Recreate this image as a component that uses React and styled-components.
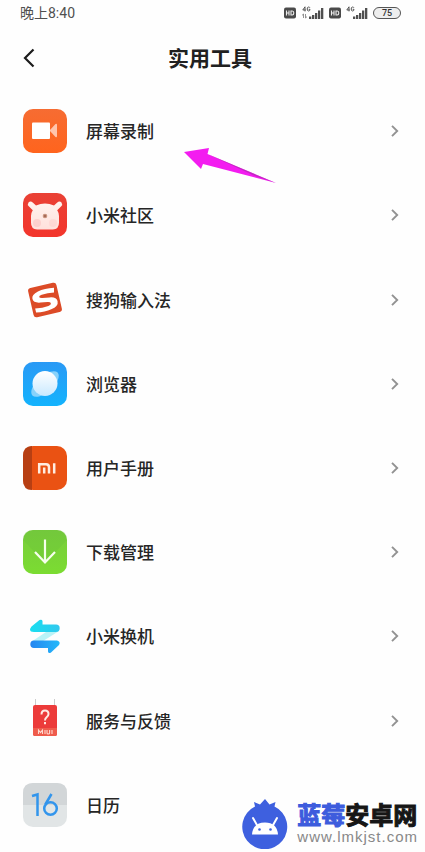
import React from "react";
import styled, { createGlobalStyle } from "styled-components";

const GlobalStyle = createGlobalStyle`
  *, *::before, *::after { box-sizing: border-box; }
  body {
    margin: 0;
    background: #fefefe;
    color: #262626;
    font-family: "Noto Sans CJK SC", sans-serif;
  }
`;

const Page = styled.div`
  position: relative;
  display: flex;
  flex-direction: column;
  min-height: 100vh;
  padding-bottom: 5px;
  overflow: hidden;
`;

const StatusBar = styled.div`
  display: flex;
  align-items: center;
  justify-content: space-between;
  height: 26px;
  padding: 0 24px 0 20px;
`;

const Clock = styled.time`
  font-family: Roboto, "Noto Sans CJK SC", sans-serif;
  font-size: 14px;
  line-height: 20px;
  color: #505050;
`;

const Indicators = styled.div`
  display: flex;
  align-items: center;
  gap: 5px;
`;

const Battery = styled.span`
  width: 28px;
  height: 12px;
  border: 1px solid #555;
  border-radius: 6px;
  background: #eee;
  font-family: Roboto, sans-serif;
  font-size: 9px;
  font-weight: 500;
  line-height: 10px;
  text-align: center;
  color: #333;
`;

const Header = styled.header`
  display: grid;
  grid-template-columns: 60px 1fr 60px;
  align-items: center;
  height: 63px;
`;

const BackButton = styled.button`
  display: flex;
  align-items: center;
  height: 44px;
  padding: 0 0 0 22px;
  border: 0;
  background: none;
  color: #1c1c1c;
`;

const Title = styled.h1`
  margin: 0;
  padding: 0 5px 2px 0;
  font-size: 21px;
  font-weight: 700;
  line-height: 30px;
  text-align: center;
  color: #202020;
`;

const List = styled.ul`
  display: grid;
  flex: 1;
  grid-auto-rows: 1fr;
  margin: 0;
  padding: 0;
  list-style: none;
`;

const Item = styled.li`
  position: relative;
  display: flex;
`;

const Row = styled.a`
  display: flex;
  flex: 1;
  align-items: center;
  min-height: 72px;
  padding: 0 25px 0 23px;
  color: inherit;
  text-decoration: none;
`;

const Label = styled.span`
  flex: 1;
  padding-left: 19px;
  font-size: 17px;
  line-height: 26px;
  font-weight: 500;
`;

const Pointer = styled.svg`
  position: absolute;
  left: 184px;
  top: 58px;
  pointer-events: none;
`;

const Watermark = styled.aside`
  position: absolute;
  right: 7px;
  bottom: 3px;
  display: flex;
  align-items: center;
  gap: 9px;
`;

const Brand = styled.div`
  display: flex;
  flex-direction: column;
`;

const BrandName = styled.strong`
  font-family: "Liberation Sans", "Noto Sans CJK SC", sans-serif;
  font-size: 24px;
  font-weight: 700;
  line-height: 24px;
  color: #161616;
  -webkit-text-stroke: 1px currentColor;
`;

const BrandAccent = styled.span`
  color: #3d5cdd;
`;

const BrandUrl = styled.span`
  font-family: "Liberation Sans", sans-serif;
  font-size: 15px;
  line-height: 17px;
  letter-spacing: 1px;
  color: #888;
`;

const HdIcon = () => (
  <svg width="12" height="12" viewBox="0 0 12 12" aria-label="HD">
    <rect y="0.5" width="12" height="11" rx="2" fill="#4a4a4a" />
    <path d="M2.5 3.500v5M5 3.500v5M2.500 6H5M7 4h1.200Q9.800 4 9.800 6T8.200 8H7Z" fill="none" stroke="#eee" strokeWidth="1.100" />
  </svg>
);

const SignalIcon = ({ data }) => (
  <svg width={data ? 23 : 22} height="14" viewBox={data ? "0 0 23 14" : "1 0 22 14"} aria-label="4G">
    <path d="M4 .8 1.800 4h3M4 .8v4.600M9 1.800Q8.500 1 7.600 1 6.200 1 6.200 3t1.400 2Q9 5 9 3.300H7.700" fill="none" stroke="#555" strokeWidth="1" />
    {data && <path d="M2.500 12V8L1 9.400M4.500 8v4L6 10.600" fill="none" stroke="#777" strokeWidth=".8" />}
    <path d="M8 10.500h2.300V13H8zM11 9h2.300v4H11zM14 7h2.300v6H14zM17 4.500h2.300V13H17zM20 2h2.300v11H20z" fill="#4f4f4f" />
  </svg>
);

const Chevron = () => (
  <svg width="10" height="14" viewBox="0 0 10 14" aria-hidden="true">
    <path d="m2 1.800 5.200 5.200L2 12.200" fill="none" stroke="#929292" strokeWidth="1.900" />
  </svg>
);

const AppIcon = ({ children }) => (
  <svg width="44" height="44" viewBox="0 0 44 44" aria-hidden="true">{children}</svg>
);

const Tile = ({ fill }) => <rect width="44" height="44" rx="10" fill={fill} />;

const Gradient = ({ id, from, to }) => (
  <linearGradient id={id} x1="0" y1="0" x2="0" y2="1">
    <stop stopColor={from} />
    <stop offset="1" stopColor={to} />
  </linearGradient>
);

const RecorderIcon = () => (
  <AppIcon>
    <Gradient id="recorder" from="#f66c32" to="#ff641d" />
    <Tile fill="url(#recorder)" />
    <path d="m26.500 21.500 6-6.500q1.500-1 1.500 1v11q0 2-1.500 1Z" fill="#ffc5ac" />
    <rect x="9" y="13.500" width="18" height="16.500" rx="1" fill="#fff" />
  </AppIcon>
);

const CommunityIcon = () => (
  <AppIcon>
    <Gradient id="community" from="#e94135" to="#f3352c" />
    <Gradient id="bunny" from="#fff3ee" to="#ffe1dc" />
    <Tile fill="url(#community)" />
    <path d="M5.500 9.500q2-2 4.500.3l3 2.700q9-4 18 0l3-2.700q2.500-2.300 4.500-.3 1.500 2-.5 4l-3.800 3.800Q36 20 36 23v6.500q.2 6.500-6.200 7H14.200q-6.400-.5-6.200-7V23q0-3 1.800-5.700L6 13.500q-2-2-.5-4Z" fill="url(#bunny)" />
    <circle cx="14" cy="30" r="4" fill="#f8aaa8" opacity=".35" />
    <circle cx="30" cy="30" r="4" fill="#f8aaa8" opacity=".2" />
    <circle cx="22" cy="23" r="2.300" fill="#c9927c" />
    <circle cx="22" cy="23" r="1" fill="#985e4d" />
  </AppIcon>
);

const SogouIcon = () => (
  <AppIcon>
    <g transform="rotate(-13 22 22)">
      <rect x="7.500" y="7" width="29" height="30" rx="3" fill="#dc4b27" />
      <path d="M33.500 12.200Q24 10.500 17 12.200 10 14 10 18q0 4.500 7 5.500l7 1q3 .5 3 2t-3 2q-6 .8-13.500-.5v4.300q9 1.500 15.500.2 8-1.500 8-6.500 0-4.500-7-5.500l-7-1q-3-.5-3-1.800 0-1.200 3-1.600 6-.6 12.500.5Z" fill="#fff" />
    </g>
  </AppIcon>
);

const BrowserIcon = () => (
  <AppIcon>
    <Gradient id="browser" from="#2a99f5" to="#13b3fd" />
    <Gradient id="planet" from="#ffffff" to="#c9e9ff" />
    <Tile fill="url(#browser)" />
    <ellipse cx="22" cy="22" rx="17" ry="8" transform="rotate(-42 22 22)" fill="#87d2fb" />
    <circle cx="22" cy="21.500" r="12.500" fill="url(#planet)" />
  </AppIcon>
);

const ManualIcon = () => (
  <AppIcon>
    <Tile fill="#ea5213" />
    <path d="M9 0Q0 0 0 10v24q0 10 9 10Z" fill="#b73f13" />
    <path d="M16.200 27.500V18.300H23q3 0 3 3v6.200M21.200 21.500v6M31.200 17.200v10.300" fill="none" stroke="#ffede1" strokeWidth="2.500" />
  </AppIcon>
);

const DownloadIcon = () => (
  <AppIcon>
    <Gradient id="download" from="#79cc3d" to="#7bdc31" />
    <Tile fill="url(#download)" />
    <path d="M0 10Q0 0 10 0h24q10 0 10 10L22 33Z" fill="#65bf38" opacity=".28" />
    <path d="M22 9.500v23M12 22l10 10.500L32 22" fill="none" stroke="#f6ffec" strokeWidth="2.200" />
  </AppIcon>
);

const MoverIcon = () => (
  <AppIcon>
    <linearGradient id="moverTop"><stop stopColor="#19def0" /><stop offset="1" stopColor="#32c8ee" /></linearGradient>
    <linearGradient id="moverBottom"><stop stopColor="#2585f0" /><stop offset="1" stopColor="#24b9fa" /></linearGradient>
    <path d="m26 16 10 1-19 12-9-1Z" fill="#baf3f7" />
    <path d="m8.500 12.500 8-6.500q2.500-1 3 1v3.500H33q3.700 0 3.700 3.700T33 18H11q-4 0-4-2.500 0-1 1.500-3Z" fill="url(#moverTop)" />
    <path d="M11 26.500h23q4 1 2 4.500l-8 7.500q-2.500 1.500-3-1V34H11q-3.700 0-3.700-3.700T11 26.500Z" fill="url(#moverBottom)" />
  </AppIcon>
);

const FeedbackIcon = () => (
  <AppIcon>
    <path d="M12.500 0v8M31.500 0v8" stroke="#ccc" strokeWidth="1" />
    <rect x="10" y="6" width="24" height="31" rx="2" fill="#ec3b3a" />
    <path d="M10 29h24v6q0 2-2 2H12q-2 0-2-2Z" fill="#ef5c4c" />
    <path d="M18.500 15.500q0-4 3.500-4t3.500 3.500q0 2-2 3.300-1.500 1-1.500 3.200M22 23v2.200" fill="none" stroke="#ffe9e4" strokeWidth="2" />
    <path d="M15.500 35v-4l2 2.500 2-2.500v4M22 31v4M24 31v3q0 1 1.300 1t1.300-1v-3M29 31v4" fill="none" stroke="#ffd9cf" strokeWidth="1.100" />
  </AppIcon>
);

const CalendarIcon = () => (
  <AppIcon>
    <Tile fill="#e1e5e6" />
    <path d="M0 22V10Q0 0 10 0h24q10 0 10 10v12Z" fill="#d2d6d8" />
    <path d="m9 13 5.500-1.500V33M28.500 11l-6.200 10.500" fill="none" stroke="#3295ec" strokeWidth="2.500" />
    <circle cx="27.500" cy="25.500" r="6.300" fill="none" stroke="#3295ec" strokeWidth="2.500" />
  </AppIcon>
);

const BlueberryLogo = () => (
  <svg width="46" height="50" viewBox="0 0 46 50" aria-hidden="true">
    <path d="M13 7.500 12 3l6 2.500L23 0l4.500 5.500 6-2.500-1 4.500A22.500 22.500 0 1 1 13 7.500Z" fill="#3e60df" />
    <path d="M10 35.500q1-12 13-12t13 12Z" fill="#fff" />
    <path d="m15.500 27-4.500-8M30.500 27l4.500-8" stroke="#fff" strokeWidth="2" strokeLinecap="round" />
    <circle cx="17.500" cy="30.500" r="1.300" fill="#3e60df" />
    <circle cx="28.500" cy="30.500" r="1.300" fill="#3e60df" />
  </svg>
);

const tools = [
  { name: "屏幕录制", Icon: RecorderIcon, more: true, highlighted: true },
  { name: "小米社区", Icon: CommunityIcon, more: true },
  { name: "搜狗输入法", Icon: SogouIcon, more: true },
  { name: "浏览器", Icon: BrowserIcon, more: true },
  { name: "用户手册", Icon: ManualIcon, more: true },
  { name: "下载管理", Icon: DownloadIcon, more: true },
  { name: "小米换机", Icon: MoverIcon, more: true },
  { name: "服务与反馈", Icon: FeedbackIcon, more: true },
  { name: "日历", Icon: CalendarIcon },
];

export default function App() {
  return (
    <>
      <GlobalStyle />
      <Page>
        <StatusBar>
          <Clock>晚上8:40</Clock>
          <Indicators>
            <HdIcon />
            <SignalIcon data />
            <HdIcon />
            <SignalIcon />
            <Battery>75</Battery>
          </Indicators>
        </StatusBar>
        <Header>
          <BackButton type="button" aria-label="返回">
            <svg width="14" height="20" viewBox="0 0 14 20" aria-hidden="true">
              <path d="M11.500 1.500 3 10l8.500 8.500" fill="none" stroke="currentColor" strokeWidth="2.200" />
            </svg>
          </BackButton>
          <Title>实用工具</Title>
        </Header>
        <List>
          {tools.map(({ name, Icon, more, highlighted }) => (
            <Item key={name}>
              <Row href="#">
                <Icon />
                <Label>{name}</Label>
                {more && <Chevron />}
              </Row>
              {highlighted && (
                <Pointer width="92" height="37" viewBox="0 0 92 37" aria-hidden="true">
                  <path d="M0 5 25 1l-1.500 6L92 36 19 17l-2 5Z" fill="#f31cf0" />
                  <path d="m23.500 7 68.500 29-21-7Z" fill="#a52da5" opacity=".6" />
                </Pointer>
              )}
            </Item>
          ))}
        </List>
        <Watermark>
          <BlueberryLogo />
          <Brand>
            <BrandName><BrandAccent>蓝莓</BrandAccent>安卓网</BrandName>
            <BrandUrl>www.lmkjst.com</BrandUrl>
          </Brand>
        </Watermark>
      </Page>
    </>
  );
}
